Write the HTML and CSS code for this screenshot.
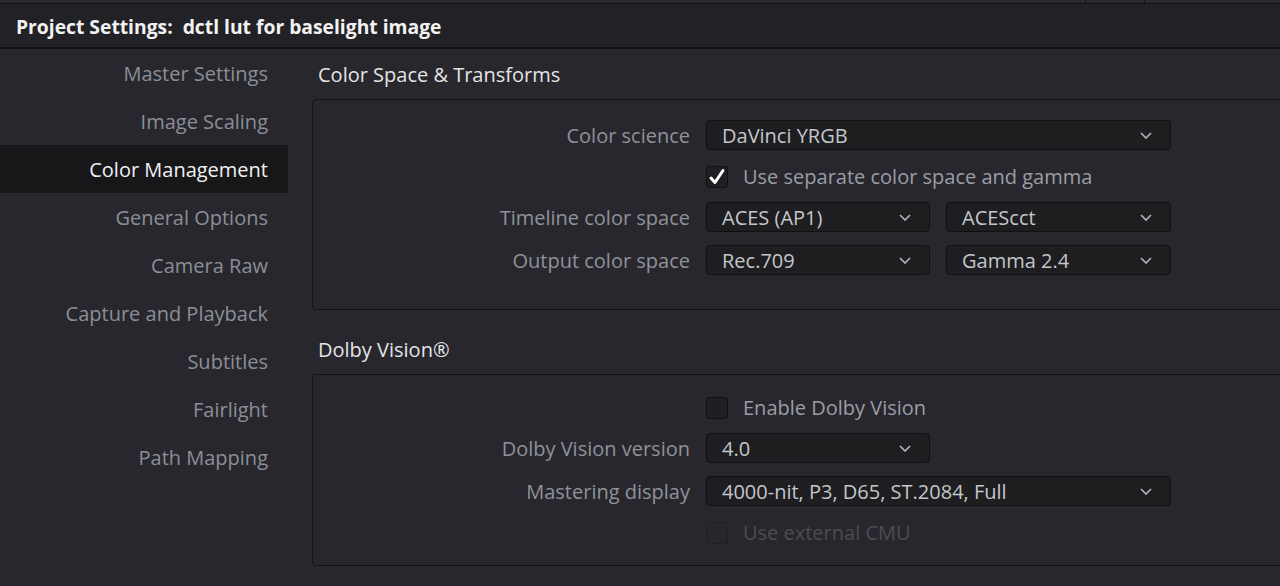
FILE: index.html
```html
<!DOCTYPE html>
<html lang="en">
<head>
    <meta charset="UTF-8">
    <meta name="viewport" content="width=device-width, initial-scale=1.0">
    <title>Project Settings</title>
    <link rel="stylesheet" href="styles.css">
</head>
<body>
    <div class="top-strip">
        <span class="strip-tab"></span>
    </div>
    <div class="title-bar">Project Settings:&nbsp; dctl lut for baselight image</div>

    <div class="main">
        <ul class="side-nav">
            <li>Master Settings</li>
            <li>Image Scaling</li>
            <li class="active">Color Management</li>
            <li>General Options</li>
            <li>Camera Raw</li>
            <li>Capture and Playback</li>
            <li>Subtitles</li>
            <li>Fairlight</li>
            <li>Path Mapping</li>
        </ul>

        <div class="content">
            <h2 class="section-title">Color Space &amp; Transforms</h2>
            <div class="panel">
                <div class="form-grid">
                    <label class="field-label">Color science</label>
                    <div class="select wide"><span>DaVinci YRGB</span><svg class="chev" viewBox="0 0 12 7"><path d="M1 1l5 5 5-5"/></svg></div>

                    <span></span>
                    <div class="check-row">
                        <span class="checkbox checked"><svg viewBox="0 0 20 20"><path d="M4 11l4 4.5L16 3.5"/></svg></span>
                        <span class="check-label">Use separate color space and gamma</span>
                    </div>

                    <label class="field-label">Timeline color space</label>
                    <div class="select-pair">
                        <div class="select"><span>ACES (AP1)</span><svg class="chev" viewBox="0 0 12 7"><path d="M1 1l5 5 5-5"/></svg></div>
                        <div class="select"><span>ACEScct</span><svg class="chev" viewBox="0 0 12 7"><path d="M1 1l5 5 5-5"/></svg></div>
                    </div>

                    <label class="field-label">Output color space</label>
                    <div class="select-pair">
                        <div class="select"><span>Rec.709</span><svg class="chev" viewBox="0 0 12 7"><path d="M1 1l5 5 5-5"/></svg></div>
                        <div class="select"><span>Gamma 2.4</span><svg class="chev" viewBox="0 0 12 7"><path d="M1 1l5 5 5-5"/></svg></div>
                    </div>
                </div>
            </div>

            <h2 class="section-title">Dolby Vision®</h2>
            <div class="panel dolby">
                <div class="form-grid">
                    <span></span>
                    <div class="check-row">
                        <span class="checkbox"></span>
                        <span class="check-label">Enable Dolby Vision</span>
                    </div>

                    <label class="field-label">Dolby Vision version</label>
                    <div class="select half"><span>4.0</span><svg class="chev" viewBox="0 0 12 7"><path d="M1 1l5 5 5-5"/></svg></div>

                    <label class="field-label">Mastering display</label>
                    <div class="select wide"><span>4000-nit, P3, D65, ST.2084, Full</span><svg class="chev" viewBox="0 0 12 7"><path d="M1 1l5 5 5-5"/></svg></div>

                    <span></span>
                    <div class="check-row disabled">
                        <span class="checkbox"></span>
                        <span class="check-label">Use external CMU</span>
                    </div>
                </div>
            </div>
        </div>
    </div>
</body>
</html>
```

FILE: styles.css
```css
* {
    box-sizing: border-box;
}
html, body {
    margin: 0;
    height: 100%;
    overflow: hidden;
}
body {
    font-family: "Open Sans", "Noto Sans", sans-serif;
    font-size: 20px;
    background: #28272d;
    color: #8e9299;
}
.top-strip {
    height: 4px;
    background: #2b2a30;
    border-bottom: 1px solid #111113;
    position: relative;
}
.strip-tab {
    position: absolute;
    top: 0;
    left: 1085px;
    width: 60px;
    height: 3px;
    border-left: 1px solid #17171a;
    border-right: 1px solid #17171a;
}
.title-bar {
    height: 45px;
    background: #222226;
    border-bottom: 2px solid #121214;
    padding: 2px 0 0 16px;
    display: flex;
    align-items: center;
    color: #f2f2f2;
    font-weight: 700;
    font-size: 19.3px;
}
.main {
    display: flex;
    overflow: hidden;
}
.side-nav {
    list-style: none;
    margin: 0;
    padding: 0;
    width: 288px;
    flex-shrink: 0;
}
.side-nav li {
    height: 48px;
    line-height: 49px;
    text-align: right;
    padding-right: 20px;
    color: #8a8f97;
}
.side-nav li.active {
    background: #17171a;
    color: #f0f0f0;
}
.content {
    flex: 1;
    padding-left: 24px;
    margin-right: -20px;
}
.section-title {
    margin: 0;
    height: 50px;
    line-height: 51px;
    padding-left: 6px;
    font-size: 20px;
    font-weight: 400;
    color: #e4e4e6;
}
.section-title + .panel + .section-title {
    margin-top: 14px;
}
.panel {
    border: 1px solid #141416;
    border-radius: 4px;
    padding: 20px 0 34px;
}
.panel.dolby {
    padding: 19px 0 20px;
}
.form-grid {
    display: grid;
    grid-template-columns: 377px 465px;
    column-gap: 16px;
    row-gap: 13px;
    align-items: center;
}
.field-label {
    text-align: right;
    color: #8e9299;
}
.select {
    height: 30px;
    background: #1e1e21;
    border: 1px solid #111113;
    border-radius: 4px;
    display: flex;
    align-items: center;
    justify-content: space-between;
    padding: 0 18px 0 15px;
    color: #c3c6cb;
}
.select.half {
    width: 224px;
}
.select-pair {
    display: grid;
    grid-template-columns: 224px 225px;
    column-gap: 16px;
}
.chev {
    width: 12px;
    height: 7px;
    fill: none;
    stroke: #b0b2b6;
    stroke-width: 1.7;
}
.check-row {
    height: 26px;
    display: flex;
    align-items: center;
    gap: 15px;
}
.checkbox {
    width: 22px;
    height: 22px;
    margin-top: 1px;
    background: #1f1f22;
    border: 1px solid #111113;
    border-radius: 3px;
    display: flex;
}
.checkbox svg {
    width: 20px;
    height: 20px;
    fill: none;
    stroke: #ffffff;
    stroke-width: 3;
    stroke-linecap: round;
    stroke-linejoin: round;
}
.check-label {
    color: #9a9ea5;
    margin-top: 1px;
}
.check-row.disabled .checkbox {
    background: #26262b;
    border-color: #202024;
}
.check-row.disabled .check-label {
    color: #4c4c53;
}
```
